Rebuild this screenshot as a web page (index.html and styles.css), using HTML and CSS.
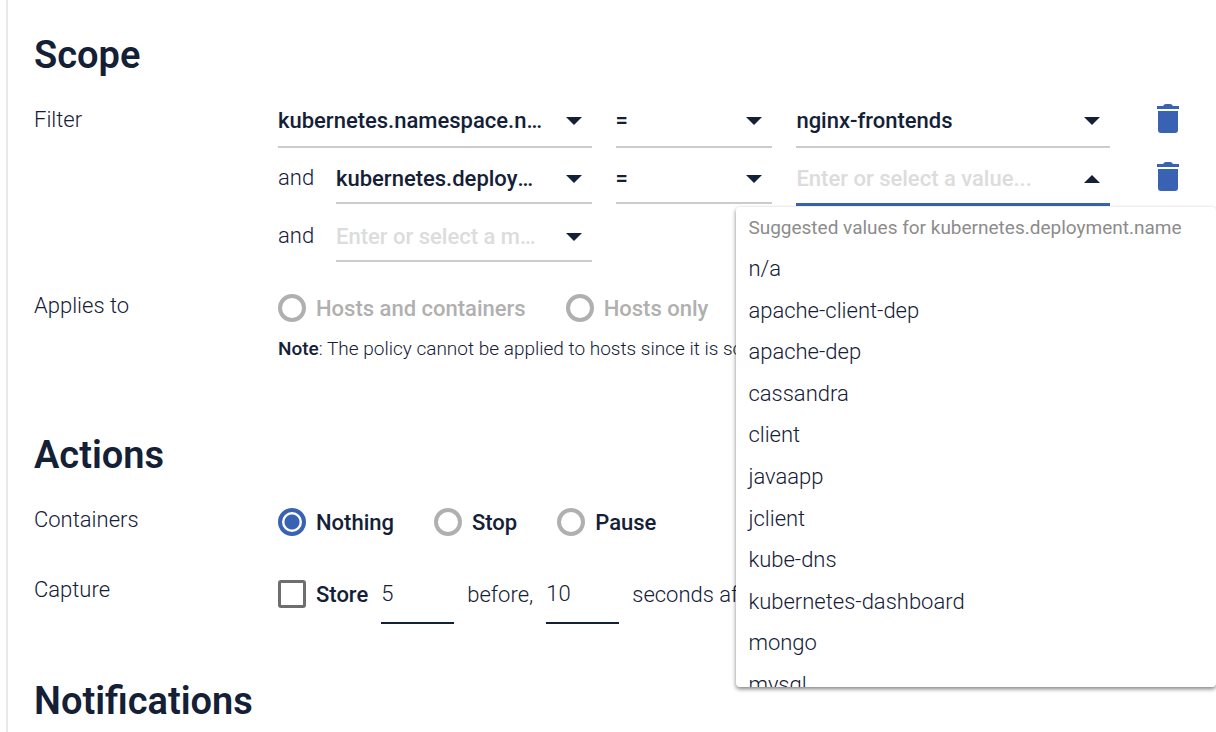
FILE: index.html
```html
<!DOCTYPE html>
<html lang="en">
<head>
    <meta charset="UTF-8">
    <title>Policy</title>
    <link rel="stylesheet" href="styles.css">
</head>
<body>
    <form class="policy">
        <section class="section">
            <h2>Scope</h2>

            <div class="row">
                <div class="row-label">Filter</div>
                <div class="filters">
                    <!-- First filter -->
                    <div class="filter">
                        <div class="metric">
                            <div class="field">
                                <select aria-label="Metric">
                                    <option>kubernetes.namespace.name</option>
                                </select>
                                <span class="caret"></span>
                            </div>
                        </div>
                        <div class="field">
                            <select aria-label="Operator">
                                <option>=</option>
                                <option>!=</option>
                            </select>
                            <span class="caret"></span>
                        </div>
                        <div class="field">
                            <select aria-label="Value">
                                <option>nginx-frontends</option>
                            </select>
                            <span class="caret"></span>
                        </div>
                        <button type="button" class="delete" aria-label="Delete filter">
                            <svg viewBox="0 0 24 32" width="24" height="32">
                                <path d="M1 2h6q1-2 3-2h4q2 0 3 2h6v3H1zM2 7h20v19q0 3-3 3H5q-3 0-3-3z"/>
                            </svg>
                        </button>
                    </div>

                    <!-- Second filter, value list open -->
                    <div class="filter joined">
                        <div class="metric">
                            <span class="and">and</span>
                            <div class="field">
                                <select aria-label="Metric">
                                    <option>kubernetes.deployment.name</option>
                                </select>
                                <span class="caret"></span>
                            </div>
                        </div>
                        <div class="field">
                            <select aria-label="Operator">
                                <option>=</option>
                                <option>!=</option>
                            </select>
                            <span class="caret"></span>
                        </div>
                        <div class="field open">
                            <select class="empty" aria-label="Value">
                                <option>Enter or select a value...</option>
                            </select>
                            <span class="caret up"></span>
                            <div class="suggestions">
                                <p>Suggested values for kubernetes.deployment.name</p>
                                <ul>
                                    <li>n/a</li>
                                    <li>apache-client-dep</li>
                                    <li>apache-dep</li>
                                    <li>cassandra</li>
                                    <li>client</li>
                                    <li>javaapp</li>
                                    <li>jclient</li>
                                    <li>kube-dns</li>
                                    <li>kubernetes-dashboard</li>
                                    <li>mongo</li>
                                    <li>mysql</li>
                                </ul>
                            </div>
                        </div>
                        <button type="button" class="delete" aria-label="Delete filter">
                            <svg viewBox="0 0 24 32" width="24" height="32">
                                <path d="M1 2h6q1-2 3-2h4q2 0 3 2h6v3H1zM2 7h20v19q0 3-3 3H5q-3 0-3-3z"/>
                            </svg>
                        </button>
                    </div>

                    <!-- New filter -->
                    <div class="filter joined">
                        <div class="metric">
                            <span class="and">and</span>
                            <div class="field">
                                <select class="empty" aria-label="Metric">
                                    <option>Enter or select a metric...</option>
                                </select>
                                <span class="caret"></span>
                            </div>
                        </div>
                    </div>
                </div>
            </div>

            <div class="row">
                <div class="row-label">Applies to</div>
                <div class="row-content">
                    <div class="options">
                        <label><input type="radio" name="applies" disabled>Hosts and containers</label>
                        <label><input type="radio" name="applies" disabled>Hosts only</label>
                    </div>
                    <p class="note"><b>Note</b>: The policy cannot be applied to hosts since it is scoped</p>
                </div>
            </div>
        </section>

        <section class="section">
            <h2>Actions</h2>

            <div class="row">
                <div class="row-label">Containers</div>
                <div class="options">
                    <label><input type="radio" name="action" checked>Nothing</label>
                    <label><input type="radio" name="action">Stop</label>
                    <label><input type="radio" name="action">Pause</label>
                </div>
            </div>

            <div class="row">
                <div class="row-label">Capture</div>
                <div class="capture">
                    <label class="store"><input type="checkbox" name="capture">Store</label>
                    <input type="text" id="before" class="seconds" value="5">
                    <label for="before">before,</label>
                    <input type="text" id="after" class="seconds" value="10">
                    <label for="after">seconds after</label>
                </div>
            </div>
        </section>

        <section class="section">
            <h2>Notifications</h2>
        </section>
    </form>
</body>
</html>
```

FILE: styles.css
```css
* {
    box-sizing: border-box;
}
body {
    margin: 0;
    background-color: #fff;
    color: #142036;
    font-family: Roboto, "Liberation Sans", sans-serif;
    font-size: 22px;
    font-weight: 300;
    overflow: hidden;
}
select, input, button {
    margin: 0;
    padding: 0;
    border: 0;
    border-radius: 0;
    background: none;
    color: inherit;
    font: inherit;
    appearance: none;
    outline: none;
}
.policy {
    min-height: 100vh;
    margin-left: 6px;
    padding: 33px 36px 0 26px;
    border-left: 2px solid #e6eaeb;
}
.section {
    margin-bottom: 53px;
}
h2 {
    margin: 0 0 15px;
    font-size: 38px;
    font-weight: 600;
    line-height: 44px;
}

/* Rows */
.row {
    display: grid;
    grid-template-columns: 244px 1fr;
}
.row + .row {
    margin-top: 14px;
}
.row-label {
    line-height: 56px;
}

/* Filters */
.filters {
    display: grid;
    gap: 2px;
}
.filter {
    display: grid;
    grid-template-columns: 2fr 1fr 2fr 46px;
    column-gap: 24px;
    height: 56px;
}
.metric {
    display: flex;
    min-width: 0;
}
.and {
    flex: none;
    width: 58px;
    line-height: 56px;
}
.field {
    display: grid;
    flex: 1;
    min-width: 0;
    position: relative;
}
.field select, .caret {
    grid-area: 1 / 1;
}
.field select {
    width: 100%;
    min-width: 0;
    height: 56px;
    padding: 2px 48px 0 0;
    border-bottom: 2px solid #ccc;
    font-weight: 500;
    text-overflow: ellipsis;
    overflow: hidden;
    white-space: nowrap;
}
.joined .field select {
    height: 54px;
    padding-top: 4px;
}
.field .empty {
    color: #dcdcdc;
}
.joined .open select {
    height: 56px;
    border-bottom: 3px solid #3a62b3;
}
.caret {
    align-self: center;
    justify-self: end;
    margin: 2px 10px 0 0;
    border: 8px solid transparent;
    border-top-color: #142036;
    border-bottom-width: 0;
    pointer-events: none;
}
.caret.up {
    border-width: 0 8px 8px;
    border-bottom-color: #142036;
}
.delete {
    align-self: center;
    justify-self: end;
    height: 32px;
    cursor: pointer;
}
.delete svg {
    display: block;
    fill: #3a62b3;
}

/* Suggested values */
.suggestions {
    position: absolute;
    top: 57px;
    left: -60px;
    z-index: 1;
    width: 480px;
    height: 480px;
    padding: 8px 12px;
    overflow: hidden;
    border-radius: 4px;
    background-color: #fff;
    box-shadow: 0 2px 4px rgba(0, 0, 0, 0.5);
}
.suggestions p {
    margin: 0 0 8px;
    color: #8c8c8c;
    font-size: 19px;
    font-weight: 400;
    line-height: 26px;
    white-space: nowrap;
}
.suggestions ul {
    margin: 0;
    padding: 0;
    list-style: none;
}
.suggestions li {
    padding: 6px 0 7px;
    line-height: 1.3;
}

/* Radios and checkbox */
.options {
    display: flex;
    gap: 40px;
    height: 56px;
    padding-top: 4px;
}
.options label, .store {
    display: flex;
    align-items: center;
    gap: 10px;
    font-weight: 500;
}
.options label:has(:disabled) {
    color: #b0b0b0;
}
input[type="radio"] {
    width: 28px;
    height: 28px;
    border: 4px solid #b0b0b0;
    border-radius: 50%;
}
input[type="radio"]:checked {
    border-color: #3a62b3;
    background: radial-gradient(circle, #3a62b3 7px, #fff 8px);
}
input[type="checkbox"] {
    width: 28px;
    height: 28px;
    border: 3px solid #6e6e6e;
    border-radius: 3px;
}
.note {
    margin: 0 0 16px;
    font-size: 19px;
    line-height: 30px;
}
.note b {
    font-weight: 500;
}

/* Capture */
.capture {
    display: flex;
    align-items: center;
    gap: 13px;
    height: 64px;
}
.seconds {
    width: 73px;
    height: 60px;
    border-bottom: 2px solid #142036;
}
```
